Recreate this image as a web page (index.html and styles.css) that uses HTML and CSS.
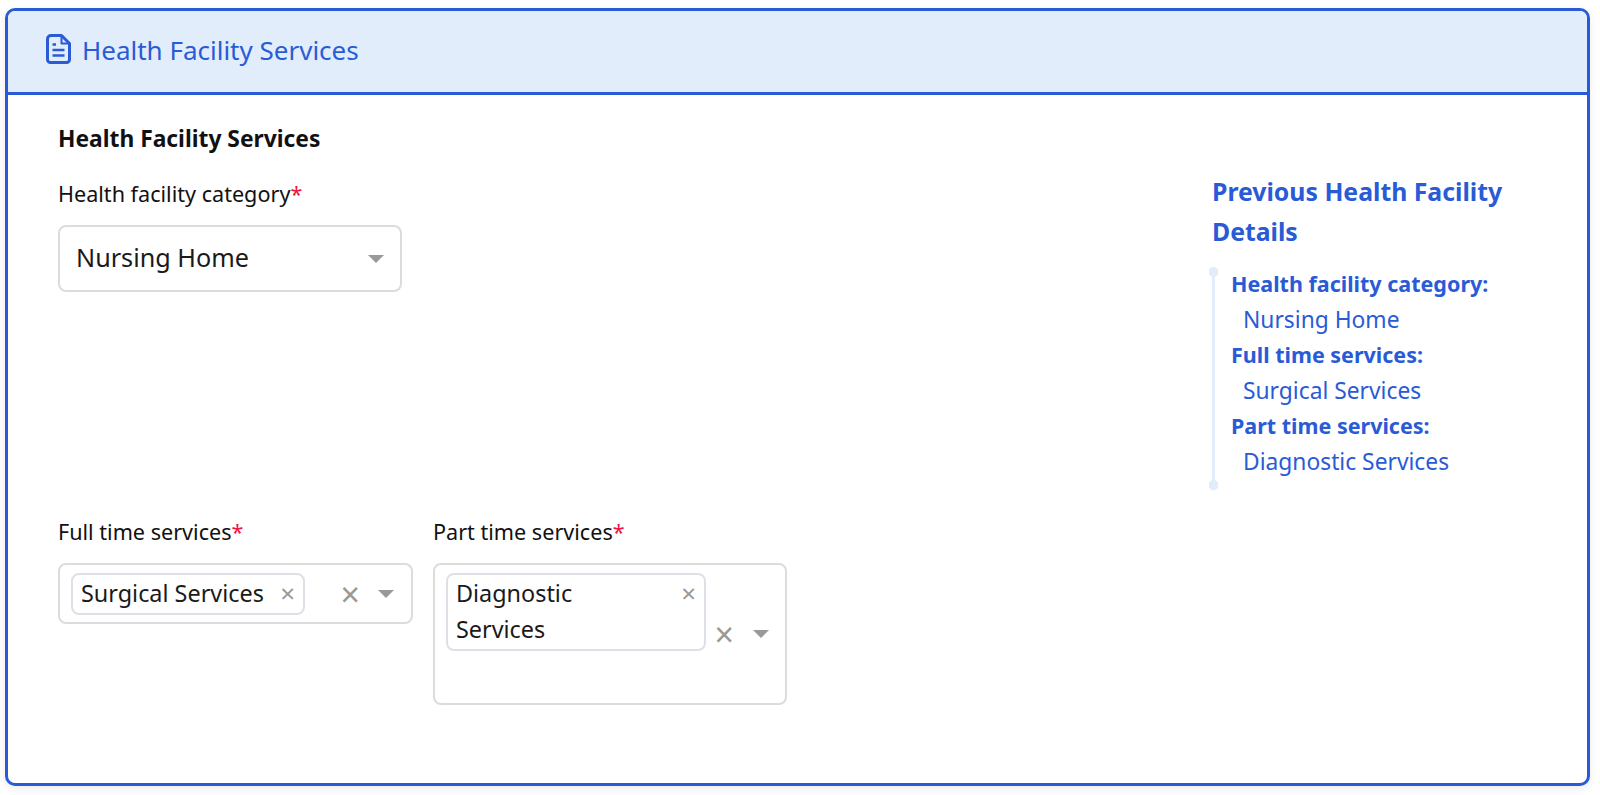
FILE: index.html
```html
<!DOCTYPE html>
<html lang="en">
<head>
<meta charset="UTF-8" />
<meta name="viewport" content="width=device-width, initial-scale=1" />
<title>Health Facility Services</title>
<link rel="stylesheet" href="styles.css">
</head>
<body>

<div class="card">
  <div class="card-header">
    <svg class="header-icon" width="25" height="30" viewBox="0 0 25 30" fill="none" stroke="#2a5bd7" stroke-width="3" stroke-linejoin="round" stroke-linecap="round">
      <path d="M5 1.5H15.5L23.5 9.5V25.5C23.5 27.2 22.2 28.5 20.5 28.5H4.5C2.8 28.5 1.5 27.2 1.5 25.5V5C1.5 3 3 1.5 5 1.5Z" />
      <path d="M15.5 2V9.5H23" stroke-width="2" />
      <path d="M6.5 10.5H10M6.5 16H18.5M6.5 21.5H18.5" stroke-width="2.4" stroke-linecap="butt" />
    </svg>
    <span class="header-title">Health Facility Services</span>
  </div>

  <div class="card-body">
    <div class="form-col">
      <h3 class="section-title">Health Facility Services</h3>

      <div class="field">
        <label class="field-label">Health facility category<span class="req">*</span></label>
        <div class="select single">
          <span class="select-value">Nursing Home</span>
          <span class="arrow"></span>
        </div>
      </div>

      <div class="field-row">
        <div class="field">
          <label class="field-label">Full time services<span class="req">*</span></label>
          <div class="select multi">
            <div class="values">
              <div class="tag">
                <span class="tag-text">Surgical Services</span>
                <span class="tag-remove">×</span>
              </div>
            </div>
            <span class="clear">×</span>
            <span class="arrow"></span>
          </div>
        </div>

        <div class="field">
          <label class="field-label">Part time services<span class="req">*</span></label>
          <div class="select multi tall">
            <div class="values">
              <div class="tag wide">
                <span class="tag-text">Diagnostic Services</span>
                <span class="tag-remove">×</span>
              </div>
            </div>
            <span class="clear">×</span>
            <span class="arrow"></span>
          </div>
        </div>
      </div>
    </div>

    <div class="prev-col">
      <h3 class="prev-title">Previous Health Facility Details</h3>
      <div class="timeline">
        <div class="prev-key">Health facility category:</div>
        <div class="prev-value">Nursing Home</div>
        <div class="prev-key">Full time services:</div>
        <div class="prev-value">Surgical Services</div>
        <div class="prev-key">Part time services:</div>
        <div class="prev-value">Diagnostic Services</div>
      </div>
    </div>
  </div>
</div>

</body>
</html>
```

FILE: styles.css
```css
body {
  margin: 0;
  height: 795px;
  overflow: hidden;
  background: #fff;
  font-family: 'Noto Sans', 'Open Sans', sans-serif;
  color: #111;
}

.card {
  box-sizing: border-box;
  height: 778px;
  margin: 8px 10px 0 5px;
  border: 3px solid #2a5bd7;
  border-radius: 10px;
  background: #fff;
  box-shadow: 0 3px 10px rgba(0, 0, 0, 0.08);
  overflow: hidden;
}

.card-header {
  box-sizing: border-box;
  height: 84px;
  display: flex;
  align-items: center;
  gap: 11px;
  padding: 0 0 4px 38px;
  background: #e1edfa;
  border-bottom: 3px solid #2a5bd7;
}

.header-icon {
  margin-bottom: 2px;
}

.header-title {
  font-size: 26px;
  color: #2a5bd7;
}

.card-body {
  display: flex;
  justify-content: space-between;
  padding: 29px 0 0 50px;
}

.section-title {
  margin: 0;
  font-size: 22.8px;
  line-height: 30px;
  font-weight: 700;
  color: #111;
}

.field {
  margin-top: 25px;
}

.field-label {
  display: block;
  font-size: 21.6px;
  line-height: 30px;
  margin-bottom: 16px;
}

.req {
  color: #f0133f;
}

.select {
  box-sizing: border-box;
  display: flex;
  align-items: center;
  border: 2px solid #dcdcdc;
  border-radius: 8px;
  background: #fff;
}

.single {
  width: 344px;
  height: 67px;
  padding: 0 16px;
  justify-content: space-between;
}

.select-value {
  font-size: 25.2px;
  color: #1a1a1a;
  padding-bottom: 3px;
}

.arrow {
  width: 0;
  height: 0;
  border-left: 8px solid transparent;
  border-right: 8px solid transparent;
  border-top: 8px solid #999;
}

.field-row {
  display: flex;
  gap: 20px;
  margin-top: 225px;
}

.field-row .field {
  margin-top: 0;
}

.multi {
  width: 355px;
  height: 61px;
  padding: 0 17px 0 11px;
}

.multi.tall {
  width: 354px;
  height: 142px;
  padding-right: 16px;
}

.values {
  flex: 1;
  align-self: flex-start;
  padding-top: 8px;
}

.tag {
  box-sizing: border-box;
  display: inline-flex;
  justify-content: space-between;
  width: 234px;
  padding: 0 8px 2px 8px;
  border: 2px solid #dde0e6;
  border-radius: 8px;
  font-size: 23.4px;
  line-height: 36px;
  color: #1a1a1a;
}

.tag.wide {
  width: 260px;
}

.wide .tag-text {
  width: 150px;
}

.tag-remove {
  font-size: 26px;
  color: #999;
}

.clear {
  font-size: 34px;
  line-height: 32px;
  color: #999;
  margin-right: 18px;
}

.tall .clear {
  margin-right: 19px;
}

.prev-col {
  width: 375px;
  margin-top: 47px;
}

.prev-title {
  margin: 0;
  max-width: 310px;
  font-size: 24.8px;
  line-height: 40px;
  font-weight: 700;
  color: #2a5bd7;
}

.timeline {
  position: relative;
  margin-top: 15px;
  padding: 0 0 11px 19px;
  color: #2a5bd7;
  font-size: 21.5px;
  line-height: 35.5px;
}

.timeline::before {
  content: '';
  position: absolute;
  left: 0;
  top: 6px;
  bottom: 0;
  width: 3px;
  background: #e1edfa;
}

.timeline::after {
  content: '';
  position: absolute;
  left: -3px;
  top: 1px;
  bottom: 0;
  width: 9px;
  background:
    radial-gradient(circle 5px at 4.5px 5px, #e1edfa 98%, transparent) top / 9px 10px no-repeat,
    radial-gradient(circle 5px at 4.5px 5px, #e1edfa 98%, transparent) bottom / 9px 10px no-repeat;
}

.prev-key {
  font-weight: 700;
}

.prev-value {
  padding-left: 12px;
  font-size: 22.8px;
}
```
